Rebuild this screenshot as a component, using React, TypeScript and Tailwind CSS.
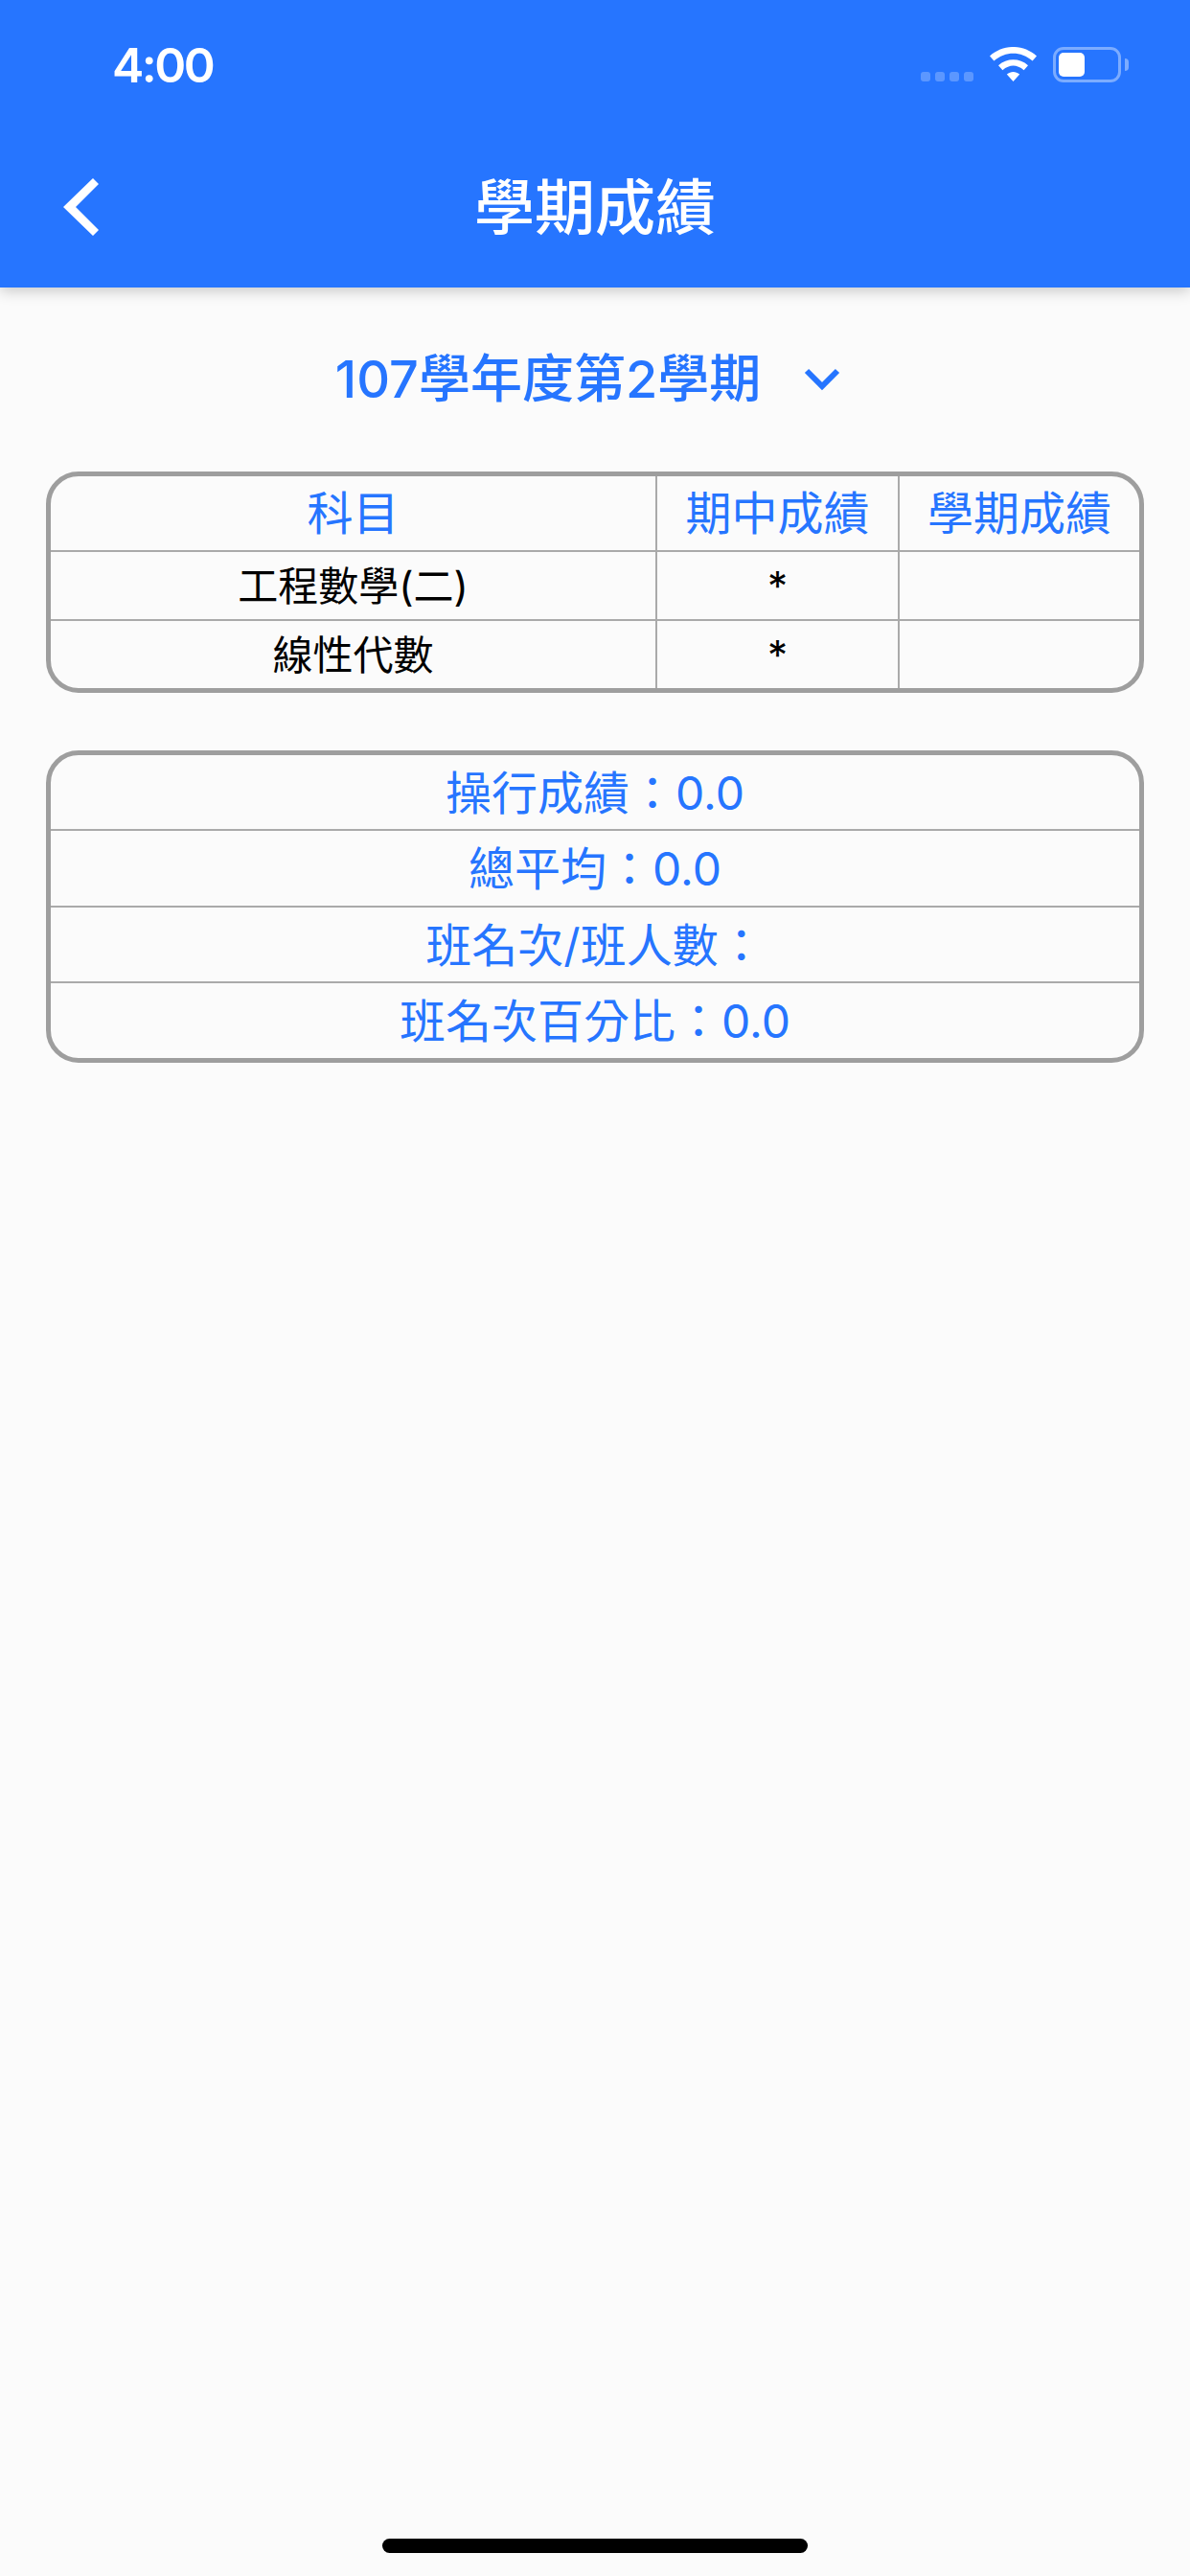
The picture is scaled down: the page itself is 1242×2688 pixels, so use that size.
const BLUE = "#2675ff";

function Row({ cells, kind }: { cells: string[]; kind: "head" | "body" }) {
  const widths = ["w-[631px]", "w-[253px]", "flex-1"];
  return (
    <div className={kind === "head" ? "flex h-[77px]" : "flex h-[72px] border-t-2 border-[#aaaaaa]"}>
      {cells.map((c, i) => (
        <div
          key={i}
          className={`${widths[i]} ${i > 0 ? "border-l-2 border-[#aaaaaa]" : ""} flex items-center justify-center pt-[1px] ${
            kind === "head" ? "text-[48px] text-[#2675ff]" : "text-[42px] text-black"
          }`}
        >
          <span className="leading-none">{c}</span>
        </div>
      ))}
    </div>
  );
}

function Line({ text, first }: { text: string; first?: boolean }) {
  return (
    <div
      className={`flex items-center justify-center pt-[3px] text-[48px] text-[#2675ff] ${
        first ? "h-[77px]" : "h-[79.5px] border-t-2 border-[#aaaaaa]"
      }`}
    >
      <span className="leading-none">{text}</span>
    </div>
  );
}

export default function App() {
  return (
    <div
      className="relative flex h-[2688px] w-[1242px] flex-col overflow-hidden bg-[#fbfbfb]"
      style={{ fontFamily: 'Inter, "Noto Sans CJK TC", sans-serif' }}
    >
      <header className="relative h-[300px] shrink-0 bg-[#2675ff] shadow-[0_4px_14px_rgba(0,0,0,0.2)]">
        <div className="flex h-[132px] items-start justify-between pt-[40px] pl-[117px] pr-[72px]">
          <span className="text-[50px] font-semibold leading-[56px] tracking-[-2.5px] text-white">4:00</span>
          <div className="flex items-start pt-[9px]">
            <div className="mt-[26px] flex gap-[5px]">
              {[0, 1, 2, 3].map((i) => (
                <div key={i} className="h-[10px] w-[10px] rounded-[3px] bg-white/25" />
              ))}
            </div>
            <svg className="ml-[17px]" width="49" height="36" viewBox="0 0 49 36">
              <path d="M0 9.5C14 -3.2 35 -3.2 49 9.5L44.6 14.6C32.6 4 16.4 4 4.4 14.6Z" fill="#fff" />
              <path d="M9 19.2C18 11.4 31 11.4 40 19.2L35.6 24.2C28 18 21 18 13.4 24.2Z" fill="#fff" />
              <path d="M17.8 28.6C22 25 27 25 31.2 28.6L24.5 36Z" fill="#fff" />
            </svg>
            <div className="relative ml-[17px] h-[37px] w-[71px] rounded-[11px] border-[3px] border-white/40 p-[3px]">
              <div className="h-[25px] w-[27px] rounded-[5px] bg-white" />
              <div className="absolute right-[-11px] top-[9px] h-[13px] w-[4px] rounded-r-[4px] bg-white/40" />
            </div>
          </div>
        </div>
        <div className="relative flex h-[168px] items-start justify-center">
          <svg className="absolute left-[64px] top-[52px]" width="42" height="62" viewBox="0 0 42 62">
            <path d="M33 2L39 8L15 32L39 56L33 62L2 32Z" fill="#fff" />
          </svg>
          <h1 className="mt-[39px] text-[63px] font-medium leading-[90px] text-white">學期成績</h1>
        </div>
      </header>

      <div className="flex flex-col px-[48px]">
        <div className="mt-[54px] flex h-[84px] items-center justify-center pr-[15px] text-[#2675ff]">
          <span className="text-[54px] font-medium leading-none">107學年度第2學期</span>
          <svg className="ml-[45px]" width="38" height="26" viewBox="0 0 38 26">
            <path d="M3 4L19 20L35 4" fill="none" stroke={BLUE} strokeWidth="6" />
          </svg>
        </div>

        <div className="mt-[54px] w-[1146px] overflow-hidden rounded-[34px] border-[5px] border-[#9e9e9e]">
          <Row kind="head" cells={["科目", "期中成績", "學期成績"]} />
          <Row kind="body" cells={["工程數學(二)", "*", ""]} />
          <Row kind="body" cells={["線性代數", "*", ""]} />
        </div>

        <div className="mt-[60px] w-[1146px] overflow-hidden rounded-[34px] border-[5px] border-[#9e9e9e]">
          <Line first text="操行成績：0.0" />
          <Line text="總平均：0.0" />
          <Line text="班名次/班人數：" />
          <Line text="班名次百分比：0.0" />
        </div>
      </div>

      <div className="absolute bottom-[24px] left-[399px] h-[15px] w-[444px] rounded-full bg-black" />
    </div>
  );
}
